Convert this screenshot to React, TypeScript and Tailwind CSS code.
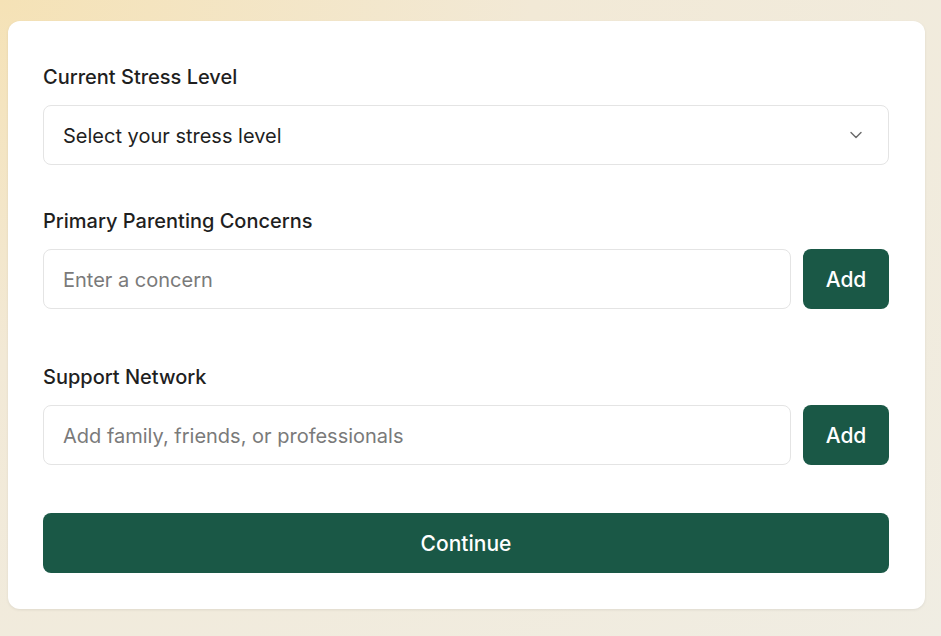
import { useState } from 'react';
import { ChevronDown } from 'lucide-react';

export default function App() {
  const [stress, setStress] = useState('');
  const [concern, setConcern] = useState('');
  const [support, setSupport] = useState('');

  const inputCls =
    'block h-[60px] w-full rounded-lg border border-[#e4e4e4] bg-white px-[19px] pt-[2px] text-[20px] text-[#1f1f1f] outline-none placeholder:text-[#7a7a7a] focus:border-[#1b5946]';
  const labelCls = 'mb-[14px] block pt-px text-[20px] font-medium leading-7 text-[#1f1f1f]';
  const btnCls = 'rounded-lg bg-[#1a5846] pt-[2px] text-[21px] font-medium text-white hover:bg-[#154a3b]';

  return (
    <div
      className="min-h-screen w-full bg-[radial-gradient(ellipse_at_top_left,#f5e2b6_0%,#f2e9d6_40%,#f0ede3_100%)] pl-[8px] pr-[16px] pt-[21px] pb-[28px]"
      style={{ fontFamily: 'Inter, "Noto Sans", sans-serif' }}
    >
      <div className="w-[917px] rounded-xl bg-white pl-[35px] pr-[36px] pt-[41px] pb-[36px] shadow-[0_1px_3px_rgba(0,0,0,0.08)]">
        {/* Stress level */}
        <label className={labelCls}>Current Stress Level</label>
        <div className="relative">
          <select
            value={stress}
            onChange={(e) => setStress(e.target.value)}
            className={inputCls + ' appearance-none pr-12 text-[20.5px]'}
          >
            <option value="">Select your stress level</option>
            <option value="low">Low</option>
            <option value="moderate">Moderate</option>
            <option value="high">High</option>
          </select>
          <ChevronDown className="pointer-events-none absolute right-[23px] top-1/2 h-[20px] w-[20px] -translate-y-1/2 text-[#6b6b6b]" strokeWidth={1.7} />
        </div>

        {/* Concerns */}
        <label className={labelCls + ' mt-[41px]'}>Primary Parenting Concerns</label>
        <div className="flex gap-3">
          <input
            value={concern}
            onChange={(e) => setConcern(e.target.value)}
            placeholder="Enter a concern"
            className={inputCls}
          />
          <button className={btnCls + ' h-[60px] w-[86px] shrink-0'}>Add</button>
        </div>

        {/* Support network */}
        <label className={labelCls + ' mt-[53px]'}>Support Network</label>
        <div className="flex gap-3">
          <input
            value={support}
            onChange={(e) => setSupport(e.target.value)}
            placeholder="Add family, friends, or professionals"
            className={inputCls}
          />
          <button className={btnCls + ' h-[60px] w-[86px] shrink-0'}>Add</button>
        </div>

        <button className={btnCls + ' mt-[48px] block h-[60px] w-full'}>Continue</button>
      </div>
    </div>
  );
}
